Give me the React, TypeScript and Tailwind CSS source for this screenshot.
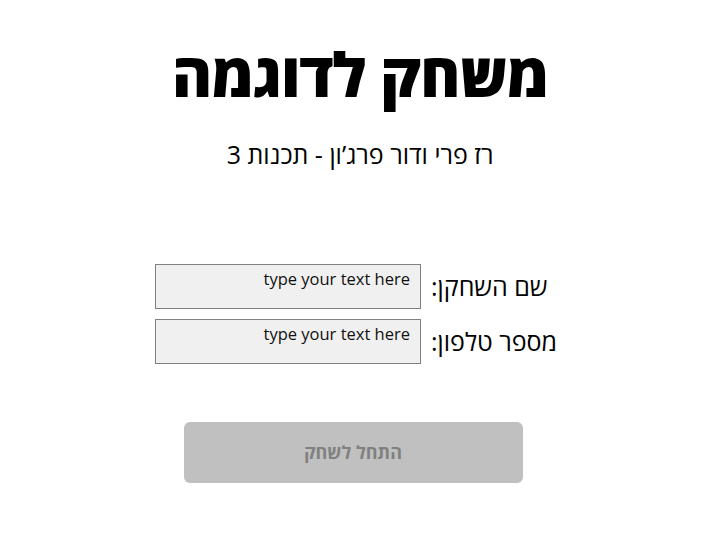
export default function App() {
  return (
    <div
      dir="rtl"
      className="w-[720px] h-[540px] bg-white flex flex-col items-center text-black"
      style={{ fontFamily: '"Open Sans", "DejaVu Sans", sans-serif' }}
    >
      <h1 className="mt-[34px] text-[61px] leading-[80px] font-extrabold tracking-[-1px]">משחק לדוגמה</h1>
      <p className="mt-[24px] text-[25px] leading-[32px]">רז פרי ודור פרג’ון - תכנות 3</p>

      <div dir="ltr" className="mt-[94px] ml-[-8px] grid grid-cols-[266px_auto] gap-x-[10px] gap-y-[10px] items-center">
        <input
          dir="ltr"
          placeholder="type your text here"
          className="h-[45px] bg-[#f0f0f0] border border-[#808080] px-[10px] pb-[16px] text-right text-[16.5px] placeholder:text-[#111]"
        />
        <label dir="rtl" className="text-[25px] text-left">שם השחקן:</label>
        <input
          dir="ltr"
          placeholder="type your text here"
          className="h-[45px] bg-[#f0f0f0] border border-[#808080] px-[10px] pb-[16px] text-right text-[16.5px] placeholder:text-[#111]"
        />
        <label dir="rtl" className="text-[25px] text-left">מספר טלפון:</label>
      </div>

      <button
        disabled
        className="mt-[58px] ml-[-14px] w-[339px] h-[61px] rounded-[6px] bg-[#c0c0c0] text-[#808080] text-[18px] font-bold"
      >
        התחל לשחק
      </button>
    </div>
  );
}
